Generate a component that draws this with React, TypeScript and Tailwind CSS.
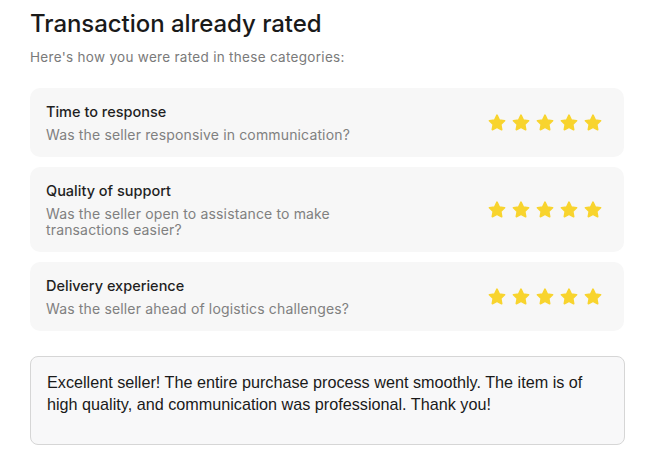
import React from 'react';

const categories = [
  { title: 'Time to response', desc: 'Was the seller responsive in communication?', rating: 5 },
  { title: 'Quality of support', desc: 'Was the seller open to assistance to make transactions easier?', rating: 5 },
  { title: 'Delivery experience', desc: 'Was the seller ahead of logistics challenges?', rating: 5 },
];

const Star = () => (
  <svg width="20" height="20" viewBox="0 0 24 24" className="shrink-0">
    <path
      d="M12 2.6l2.8 5.8 6.3.9-4.6 4.4 1.1 6.3L12 17l-5.6 3 1.1-6.3-4.6-4.4 6.3-.9z"
      fill="#f8d42e"
      stroke="#f8d42e"
      strokeWidth="2"
      strokeLinejoin="round"
    />
  </svg>
);

export default function App() {
  return (
    <div className="w-[650px] h-[464px] bg-white px-[30px] pt-[8px] font-['Inter',sans-serif]">
      <h1 className="text-[24px] leading-[32px] font-medium text-[#1a1a1a] tracking-[-0.05px]">Transaction already rated</h1>
      <p className="mt-[7px] text-[13.5px] leading-[20px] text-[#7a7a7a] tracking-[0.3px]">Here's how you were rated in these categories:</p>

      <div className="mt-[21px] flex flex-col gap-[10px] w-[594px]">
        {categories.map((c) => (
          <div key={c.title} className="bg-[#f7f7f7] rounded-[10px] pl-[16px] pr-[21px] pt-[14px] pb-[14px] flex items-center justify-between">
            <div className="w-[340px]">
              <div className="text-[14.5px] leading-[20px] font-medium text-[#1f1f1f]">{c.title}</div>
              <div className="mt-[5px] text-[14px] leading-[16px] text-[#808080] tracking-[0.15px]">{c.desc}</div>
            </div>
            <div className="flex gap-[4px]">
              {Array.from({ length: c.rating }).map((_, i) => (
                <Star key={i} />
              ))}
            </div>
          </div>
        ))}
      </div>

      <div className="mt-[25px] w-[595px] h-[89px] border border-[#d6d6d6] rounded-[8px] bg-[#f8f8f9] px-[16px] pt-[14px] font-['Liberation_Sans',Arial,sans-serif] text-[16.2px] leading-[22px] text-[#1a1a1a]">
        Excellent seller! The entire purchase process went smoothly. The item is of high quality, and communication was professional. Thank you!
      </div>
    </div>
  );
}
